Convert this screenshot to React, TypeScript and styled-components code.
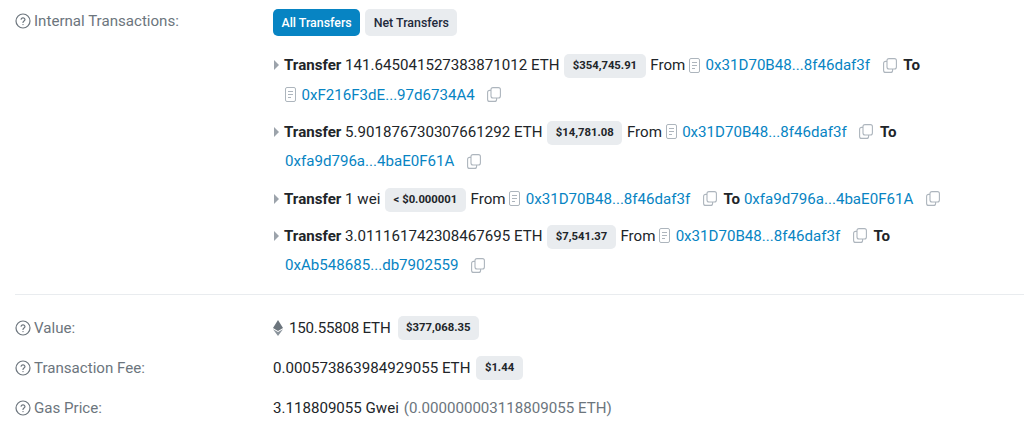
import { createGlobalStyle, styled } from "styled-components";

const GlobalStyle = createGlobalStyle`
  html, body {
    margin: 0;
    padding: 0;
    background: #ffffff;
  }
  body {
    width: 1024px;
    height: 427px;
    overflow: hidden;
    font-family: Roboto, "Liberation Sans", sans-serif;
    font-size: 15.1px;
    color: #212529;
  }
`;

const Page = styled.div`
  padding: 9px 0 0 15px;
`;

const Row = styled.div<{ $mb?: number }>`
  display: grid;
  grid-template-columns: 258px 1fr;
  margin-bottom: ${(p) => p.$mb ?? 0}px;
`;

const Label = styled.div`
  display: flex;
  align-items: center;
  gap: 3px;
  height: 24px;
  color: #6c757d;
`;

const Tabs = styled.div`
  display: flex;
  gap: 5px;
  margin-bottom: 15px;
`;

const Tab = styled.button<{ $active?: boolean }>`
  height: 27px;
  padding: 0 8.5px;
  border: 0;
  border-radius: 5px;
  font-family: inherit;
  font-size: 12.4px;
  font-weight: 500;
  color: ${(p) => (p.$active ? "#ffffff" : "#1f2a3c")};
  background: ${(p) => (p.$active ? "#0784c3" : "#e9ecef")};
`;

const TransferList = styled.div`
  display: flex;
  flex-direction: column;
  gap: 7.8px;
  width: 736px;
`;

const Transfer = styled.div`
  padding-left: 12px;
  text-indent: -11px;
  line-height: 29.5px;
`;

const Caret = styled.span`
  display: inline-block;
  width: 0;
  height: 0;
  margin-right: 5px;
  vertical-align: 0;
  border-style: solid;
  border-width: 5px 0 5px 5.5px;
  border-color: transparent transparent transparent #9ca3ab;
`;

const Strong = styled.b`
  font-weight: 700;
`;

const Price = styled.span`
  display: inline-block;
  height: 24px;
  margin: 0 1px;
  padding: 0 8.5px;
  border-radius: 5px;
  background: #e9ecef;
  font-size: 11.3px;
  font-weight: 700;
  line-height: 24px;
  text-indent: 0;
  vertical-align: 1px;
`;

const AddressGroup = styled.span`
  white-space: nowrap;
`;

const Address = styled.a`
  color: #0784c3;
  text-decoration: none;
`;

const IconWrap = styled.span<{ $ml?: number; $mr?: number }>`
  display: inline-block;
  margin-left: ${(p) => p.$ml ?? 0}px;
  margin-right: ${(p) => p.$mr ?? 0}px;
  color: #adb5bd;
  line-height: 0;
  text-indent: 0;
  vertical-align: -2.5px;
`;

const Divider = styled.hr`
  height: 1px;
  margin: 13px 0 21px;
  border: 0;
  background: #e9ecef;
`;

const Value = styled.div<{ $gap?: number }>`
  display: flex;
  align-items: center;
  gap: ${(p) => p.$gap ?? 5}px;
  height: 24px;
`;

const TightAmount = styled.span`
  letter-spacing: -0.2px;
`;

const Muted = styled.span`
  color: #6c757d;
`;

const HelpIcon = () => (
  <svg width="16" height="16" viewBox="0 0 16 16" fill="none" stroke="#6c757d" strokeWidth="1.2">
    <circle cx="8" cy="8" r="7" />
    <path d="M6.1 6.2a2 2 0 0 1 3.9.4c0 1.3-2 1.6-2 2.9" strokeLinecap="round" />
    <circle cx="8" cy="11.6" r="0.7" fill="#6c757d" stroke="none" />
  </svg>
);

const DocIcon = () => (
  <IconWrap $mr={5.5}>
    <svg width="11" height="15" viewBox="0 0 11 15" fill="none" stroke="#adb5bd" strokeWidth="1">
      <rect x="0.5" y="0.5" width="10" height="14" rx="1.5" />
      <path d="M3 4.5h5M3 7.5h5M3 10.5h3" />
    </svg>
  </IconWrap>
);

const CopyIcon = ({ mr = 0 }: { mr?: number }) => (
  <IconWrap $ml={12.5} $mr={mr}>
    <svg width="14" height="15" viewBox="0 0 14 15" fill="none" stroke="#adb5bd" strokeWidth="1.1">
      <rect x="4" y="0.6" width="9.4" height="10.4" rx="2" />
      <path d="M4 3.4H2.6a2 2 0 0 0-2 2v7a2 2 0 0 0 2 2h5a2 2 0 0 0 2-2V11" />
    </svg>
  </IconWrap>
);

const EthIcon = () => (
  <svg width="10" height="16" viewBox="0 0 10 16">
    <path d="M5 0 0 8.1 5 11l5-2.9z" fill="#6c757d" />
    <path d="M5 12 0 9.2 5 16l5-6.8z" fill="#8a939b" />
  </svg>
);

const FROM_ADDRESS = "0x31D70B48...8f46daf3f";

const transfers = [
  { amount: "141.645041527383871012 ETH", price: "$354,745.91", to: "0xF216F3dE...97d6734A4", toDoc: true },
  { amount: "5.901876730307661292 ETH", price: "$14,781.08", to: "0xfa9d796a...4baE0F61A", toDoc: false },
  { amount: "1 wei", price: "< $0.000001", to: "0xfa9d796a...4baE0F61A", toDoc: false },
  { amount: "3.011161742308467695 ETH", price: "$7,541.37", to: "0xAb548685...db7902559", toDoc: false },
];

export default function App() {
  return (
    <Page>
      <GlobalStyle />
      <Row>
        <Label>
          <HelpIcon />
          Internal Transactions:
        </Label>
        <div>
          <Tabs>
            <Tab $active>All Transfers</Tab>
            <Tab>Net Transfers</Tab>
          </Tabs>
          <TransferList>
            {transfers.map((t) => (
              <Transfer key={t.amount}>
                <Caret />
                <Strong>Transfer</Strong> {t.amount} <Price>{t.price}</Price> From{" "}
                <AddressGroup>
                  <DocIcon />
                  <Address>{FROM_ADDRESS}</Address>
                  <CopyIcon mr={3} />
                </AddressGroup>{" "}
                <Strong>To</Strong>{" "}
                <AddressGroup>
                  {t.toDoc && <DocIcon />}
                  <Address>{t.to}</Address>
                  <CopyIcon />
                </AddressGroup>
              </Transfer>
            ))}
          </TransferList>
        </div>
      </Row>
      <Divider />
      <Row $mb={16}>
        <Label>
          <HelpIcon />
          Value:
        </Label>
        <Value $gap={6}>
          <EthIcon />
          <TightAmount>150.55808 ETH</TightAmount>
          <Price>$377,068.35</Price>
        </Value>
      </Row>
      <Row $mb={16}>
        <Label>
          <HelpIcon />
          Transaction Fee:
        </Label>
        <Value>
          0.000573863984929055 ETH
          <Price>$1.44</Price>
        </Value>
      </Row>
      <Row>
        <Label>
          <HelpIcon />
          Gas Price:
        </Label>
        <Value>
          3.118809055 Gwei <Muted>(0.000000003118809055 ETH)</Muted>
        </Value>
      </Row>
    </Page>
  );
}
